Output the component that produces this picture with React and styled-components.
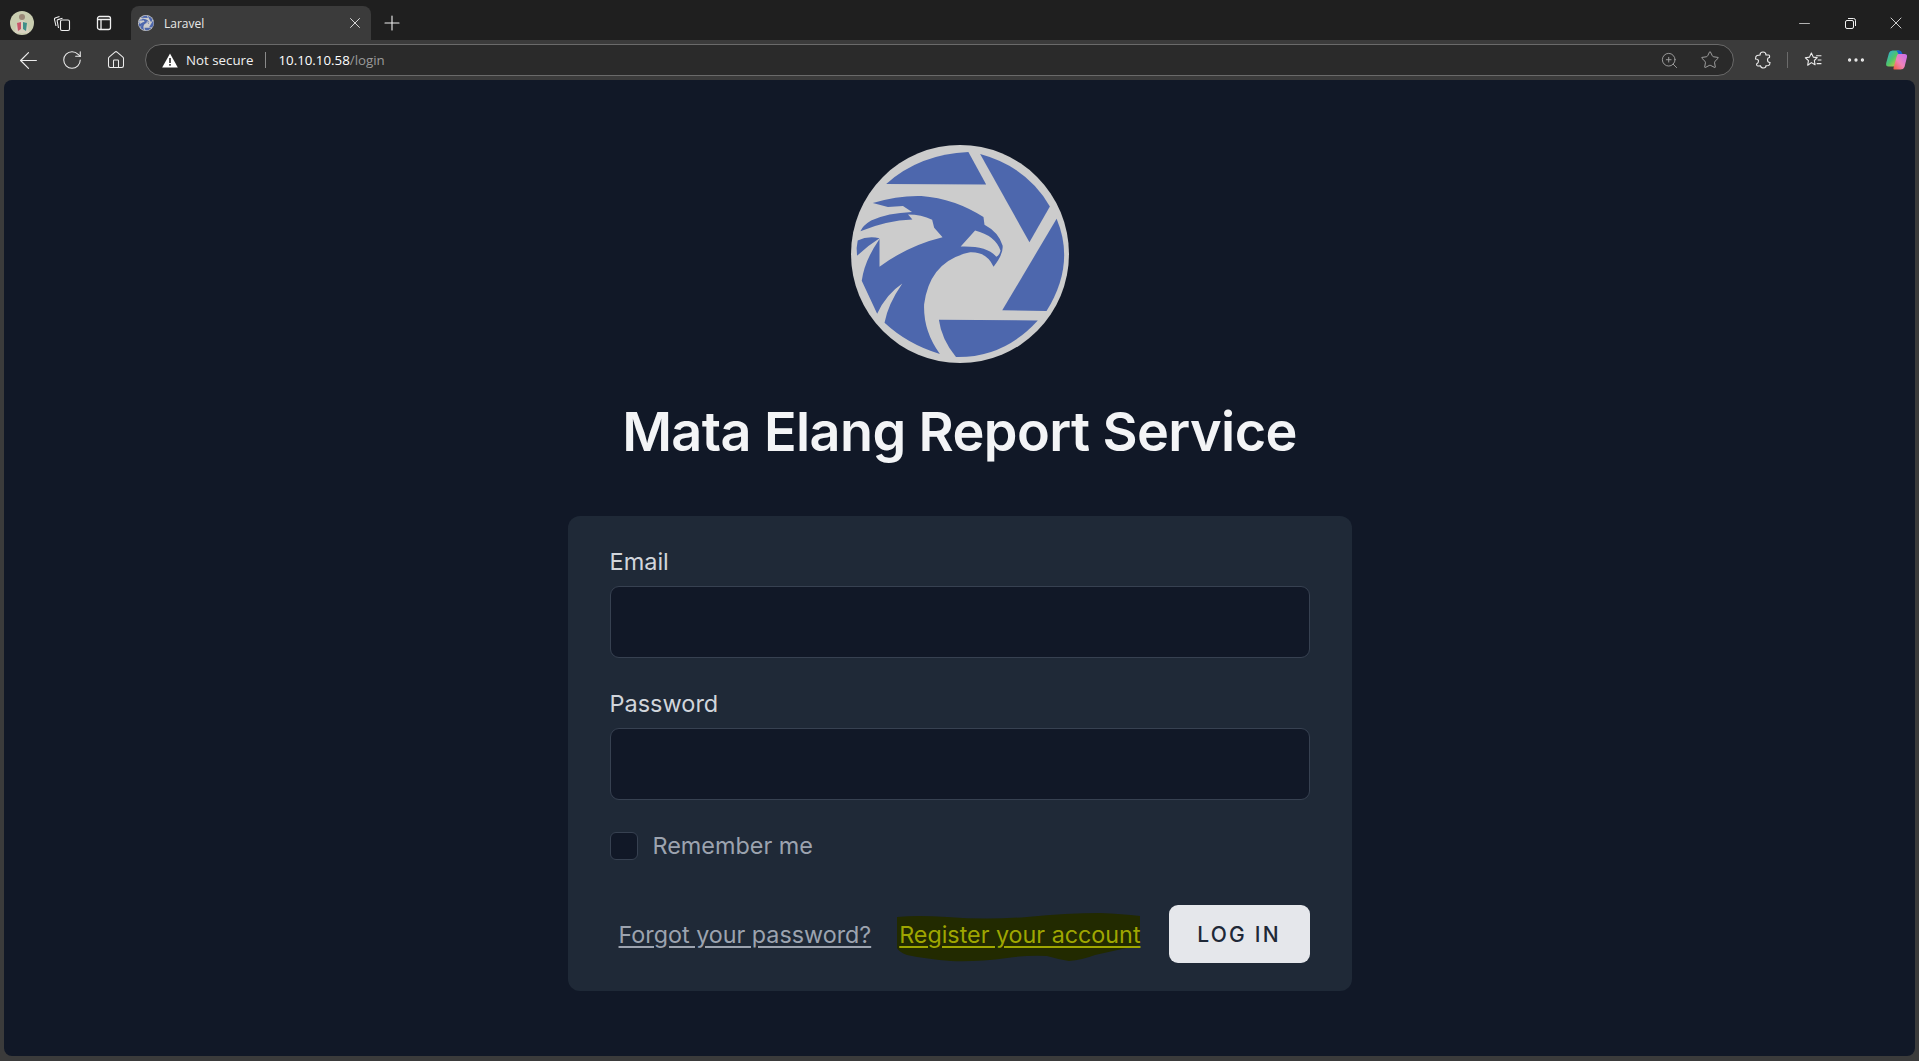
import React from "react";
import styled, { createGlobalStyle } from "styled-components";
import { ArrowLeft, RotateCw, Home, ZoomIn, Star, Ellipsis, X, Plus, Minus } from "lucide-react";

const GlobalStyle = createGlobalStyle`
  html, body {
    margin: 0;
    padding: 0;
    height: 100%;
    background: #3b3b3b;
    overflow: hidden;
  }
  * { box-sizing: border-box; }
`;

const Window = styled.div`
  display: flex;
  flex-direction: column;
  width: 1919px;
  height: 1061px;
  background: #3b3b3b;
`;

const TabStrip = styled.div`
  display: flex;
  align-items: flex-end;
  height: 40px;
  background: #1f1f1f;
`;

const StripIcons = styled.div`
  display: flex;
  align-items: center;
  height: 34px;
  width: 131px;
  padding-left: 2px;
`;

const StripIcon = styled.div`
  display: flex;
  align-items: center;
  justify-content: center;
  width: ${(p) => p.$w || 42}px;
  height: 34px;
  color: #f0f0f0;
`;

const Avatar = styled.div`
  width: 24px;
  height: 24px;
  border-radius: 50%;
  overflow: hidden;
`;

const Tab = styled.div`
  display: flex;
  align-items: center;
  width: 240px;
  height: 34px;
  padding: 0 7px;
  background: #3b3b3b;
  border-radius: 8px 8px 0 0;
  color: #e8e8e8;
  font: 12px "Open Sans", sans-serif;
`;

const TabTitle = styled.span`
  flex: 1;
  margin-left: 10px;
`;

const WindowControls = styled.div`
  display: flex;
  margin-left: auto;
  height: 34px;
`;

const WindowButton = styled.div`
  display: flex;
  align-items: center;
  justify-content: center;
  width: 46px;
  color: #f0f0f0;
`;

const Toolbar = styled.div`
  display: flex;
  align-items: center;
  height: 40px;
  padding-left: 6px;
  background: #3b3b3b;
`;

const ToolButton = styled.div`
  display: flex;
  align-items: center;
  justify-content: center;
  flex: none;
  width: ${(p) => p.$w || 44}px;
  height: 32px;
  color: ${(p) => p.$color || "#ededed"};
`;

const AddressBar = styled.div`
  display: flex;
  flex: none;
  align-items: center;
  width: 1589px;
  height: 32px;
  margin-left: 7px;
  padding: 0 2px 0 16px;
  background: #2a2a2a;
  border: 1px solid #6a6a6a;
  border-radius: 16px;
  font: 13.3px "Open Sans", sans-serif;
  color: #f0f0f0;
`;

const Secure = styled.span`
  margin-left: 8px;
`;

const Divider = styled.span`
  width: 1px;
  height: 16px;
  margin: 0 12px;
  background: #8a8a8a;
`;

const Url = styled.span`
  flex: 1;
  color: #ffffff;
  font-weight: 500;
  span {
    color: #9a9a9a;
    font-weight: 400;
  }
`;

const ToolGroup = styled.div`
  display: flex;
  flex: none;
  align-items: center;
  margin-left: 5px;
`;

const ToolDivider = styled.span`
  flex: none;
  width: 1px;
  height: 16px;
  background: #6b6b6b;
`;

const Page = styled.main`
  display: flex;
  flex-direction: column;
  align-items: center;
  height: 976px;
  margin: 0 4px;
  padding-top: 65px;
  background: #111827;
  border-radius: 8px;
`;

const LogoMark = styled.svg`
  display: block;
  flex: none;
`;

const Title = styled.h1`
  margin: 25px 0 0;
  color: #f3f4f6;
  font: 600 54px/88px Inter, sans-serif;
  letter-spacing: -0.6px;
`;

const Card = styled.form`
  width: 784px;
  height: 475px;
  margin-top: 40px;
  padding: 23px 42px 0;
  background: #1f2937;
  border-radius: 12px;
`;

const Field = styled.div`
  margin-bottom: 23px;
`;

const Label = styled.label`
  display: block;
  height: 41px;
  margin-bottom: 6px;
  color: #d1d5db;
  font: 400 23.5px/45px Inter, sans-serif;
`;

const Input = styled.input`
  display: block;
  width: 100%;
  height: 72px;
  background: #111827;
  border: 1.5px solid #374151;
  border-radius: 9px;
  outline: none;
`;

const RememberRow = styled.label`
  display: flex;
  align-items: center;
  height: 36px;
  margin-top: 28px;
  gap: 15px;
  color: #9ca3af;
  font: 400 23.4px/36px Inter, sans-serif;
`;

const Checkbox = styled.span`
  width: 28px;
  height: 28px;
  background: #111827;
  border: 1.5px solid #374151;
  border-radius: 6px;
`;

const Actions = styled.div`
  display: flex;
  align-items: center;
  justify-content: flex-end;
  gap: 28px;
  margin-top: 41px;
`;

const TextLink = styled.a`
  position: relative;
  padding-top: 2px;
  color: ${(p) => p.$color || "#9ca3af"};
  font: 400 23.3px/36px Inter, sans-serif;
  text-decoration: underline;
  text-underline-offset: 3px;
`;

const LinkText = styled.span`
  position: relative;
`;

const Scribble = styled.svg`
  position: absolute;
  left: -2px;
  top: -2px;
`;

const LoginButton = styled.button`
  width: 141px;
  height: 58px;
  background: #e5e7eb;
  border: 0;
  border-radius: 9px;
  color: #1f2937;
  font: 500 21px Inter, sans-serif;
  letter-spacing: 2.2px;
`;

const BLUE = "#4d67ad";

const Logo = ({ size }) => (
  <LogoMark width={size} height={size} viewBox="65 45 650 650">
    <circle cx="390" cy="370" r="325" fill="#cccccc" />
    <g fill={BLUE}>
      <path d="M170,161 Q270,72 415,66 L468,163 Z" />
      <path d="M450,72 Q590,110 658,228 L597,335 Z" />
      <path d="M678,265 Q735,400 648,540 L516,538 Z" />
      <path d="M327,566 L622,568 Q520,680 378,677 Q335,625 327,566 Z" />
      <g transform="translate(75 180)">
        <path d="M255,488 Q205,420 208,340 Q225,210 345,185 Q395,183 415,228 Q445,190 442,165 Q430,125 388,103 L385,80 Q300,25 200,17 Q130,15 55,38 L100,50 L145,47 L172,65 Q100,68 50,90 Q25,105 18,122 Q95,90 173,87 L160,72 Q200,72 232,88 L238,112 L263,140 Q160,165 75,228 L75,145 Q30,210 22,270 L68,368 Q95,310 143,278 Q100,340 90,395 Q160,460 255,488 Z" />
        <path d="M10,150 Q40,135 75,143 Q40,165 8,195 Q5,170 10,150 Z" />
        <path d="M317,168 L360,120 Q420,135 436,180 Q432,195 423,198 Q395,165 317,168 Z" fill="#cccccc" />
      </g>
    </g>
  </LogoMark>
);

const CollectionsIcon = () => (
  <svg width="18" height="18" viewBox="0 0 18 18" fill="none" stroke="currentColor" strokeWidth="1.1">
    <path d="M3 12 L1.5 5.5 Q1.3 4.5 2.2 4 L6.5 2.5" />
    <path d="M5.5 14 L4.2 7 Q4 6 5 5.6 L9.5 4.2" />
    <rect x="7.5" y="6" width="9" height="10.5" rx="1.5" />
  </svg>
);

const SidebarIcon = () => (
  <svg width="16" height="16" viewBox="0 0 16 16" fill="none" stroke="currentColor" strokeWidth="1.3">
    <rect x="1.5" y="1.5" width="13" height="13" rx="2" />
    <path d="M1.5 4.5 H14.5 M5 4.5 V14.5" />
  </svg>
);

const WarningIcon = () => (
  <svg width="16" height="15" viewBox="0 0 16 15">
    <path d="M8 0.5 L15.8 14.5 H0.2 Z" fill="#ffffff" strokeLinejoin="round" />
    <rect x="7.2" y="5" width="1.6" height="5" fill="#2a2a2a" />
    <rect x="7.2" y="11" width="1.6" height="1.7" fill="#2a2a2a" />
  </svg>
);

const RestoreIcon = () => (
  <svg width="11" height="11" viewBox="0 0 11 11" fill="none" stroke="currentColor" strokeWidth="1">
    <rect x="0.5" y="2.5" width="8" height="8" rx="1.5" />
    <path d="M3 0.5 H8.5 Q10.5 0.5 10.5 2.5 V8" />
  </svg>
);

const PuzzleIcon = () => (
  <svg width="18" height="18" viewBox="0 0 18 18" fill="none" stroke="currentColor" strokeWidth="1.1">
    <path d="M6 4 Q6 1 9 1 Q12 1 12 4 H14.5 Q16 4 15.5 6.5 Q13.5 6.5 13.5 9 Q13.5 11.5 16 11.5 Q16 14 14.5 14.5 L12 14.8 Q12 17 9.5 17 Q7 17 6.5 14.8 L4 15 Q2.5 15 2.6 13 Q4.5 12 4.5 10 Q4.5 8 1.5 8 Q1.5 5 3 4.5 Z" />
  </svg>
);

const FavoritesIcon = () => (
  <svg width="19" height="19" viewBox="0 0 18 18" fill="none" stroke="currentColor" strokeWidth="1.05">
    <path d="M7 2 L8.8 5.8 L12.5 6.3 L9.8 9 L10.5 13 L7 11 L3.5 13.5 L4.2 9.2 L1.3 6.4 L5.2 5.8 Z" strokeLinejoin="round" />
    <path d="M11.5 4.5 H16.5 M13 8.5 H16.5 M12 12 H16.5" />
  </svg>
);

const CopilotIcon = () => (
  <svg width="23" height="22" viewBox="0 0 22 22">
    <defs>
      <linearGradient id="copilotLeft" x1="0" y1="0" x2="1" y2="1">
        <stop offset="0" stopColor="#2aa7ea" />
        <stop offset="0.5" stopColor="#4fc66a" />
        <stop offset="1" stopColor="#f6c834" />
      </linearGradient>
      <linearGradient id="copilotRight" x1="1" y1="0" x2="0" y2="1">
        <stop offset="0" stopColor="#c56cf0" />
        <stop offset="0.55" stopColor="#f083b8" />
        <stop offset="1" stopColor="#f0603a" />
      </linearGradient>
    </defs>
    <path d="M7 1.5 H13 Q14.5 1.5 14 3 L10 16 Q9.5 17.5 8 17.5 H3 Q0 17.5 0.7 14 L3.5 4 Q4.3 1.5 7 1.5 Z" fill="url(#copilotLeft)" />
    <path d="M13 5 H19 Q22 5 21.5 8 L19 18 Q18 20.5 15 20.5 H9 Q7.5 20.5 8 19 L11.5 6.5 Q12 5 13 5 Z" fill="url(#copilotRight)" />
    <path d="M11 1.5 H14 Q16 1.5 16.5 4 L17 5 H13 Z" fill="#1662d6" />
  </svg>
);

const AvatarPic = () => (
  <svg width="24" height="24" viewBox="0 0 24 24">
    <rect width="24" height="24" fill="#c9cdb0" />
    <circle cx="12" cy="6" r="3" fill="#9b8878" />
    <path d="M5 22 Q6 10 12 9 Q18 10 19 22 Z" fill="#d8d2c0" />
    <path d="M7 12 L11 11 L11 18 L8 20 Z" fill="#c9566a" />
    <path d="M13 11 L17 12 L16 20 L13 18 Z" fill="#3f8f88" />
  </svg>
);

const App = () => (
  <Window>
    <GlobalStyle />
    <TabStrip>
      <StripIcons>
        <StripIcon $w={39}>
          <Avatar><AvatarPic /></Avatar>
        </StripIcon>
        <StripIcon><CollectionsIcon /></StripIcon>
        <StripIcon><SidebarIcon /></StripIcon>
      </StripIcons>
      <Tab>
        <Logo size={16} />
        <TabTitle>Laravel</TabTitle>
        <X size={18} strokeWidth={1.2} />
      </Tab>
      <StripIcon $w={42}><Plus size={24} strokeWidth={1.1} /></StripIcon>
      <WindowControls>
        <WindowButton><Minus size={17} strokeWidth={1} /></WindowButton>
        <WindowButton><RestoreIcon /></WindowButton>
        <WindowButton><X size={20} strokeWidth={1} /></WindowButton>
      </WindowControls>
    </TabStrip>
    <Toolbar>
      <ToolButton><ArrowLeft size={27} strokeWidth={1.05} /></ToolButton>
      <ToolButton><RotateCw size={22} strokeWidth={1.15} /></ToolButton>
      <ToolButton><Home size={20} strokeWidth={1.25} /></ToolButton>
      <AddressBar>
        <WarningIcon />
        <Secure>Not secure</Secure>
        <Divider />
        <Url>10.10.10.58<span>/login</span></Url>
        <ToolButton $w={40} $color="#a8a8a8"><ZoomIn size={19} strokeWidth={1.1} /></ToolButton>
        <ToolButton $w={42} $color="#a8a8a8"><Star size={20} strokeWidth={1.1} /></ToolButton>
      </AddressBar>
      <ToolGroup>
        <ToolButton $w={48}><PuzzleIcon /></ToolButton>
        <ToolDivider />
        <ToolButton $w={50}><FavoritesIcon /></ToolButton>
        <ToolButton $w={36}><Ellipsis size={22} strokeWidth={1.6} /></ToolButton>
        <ToolButton $w={45}><CopilotIcon /></ToolButton>
      </ToolGroup>
    </Toolbar>
    <Page>
      <Logo size={218} />
      <Title>Mata Elang Report Service</Title>
      <Card>
        <Field>
          <Label>Email</Label>
          <Input type="email" />
        </Field>
        <Field>
          <Label>Password</Label>
          <Input type="password" />
        </Field>
        <RememberRow>
          <Checkbox />
          Remember me
        </RememberRow>
        <Actions>
          <TextLink>Forgot your password?</TextLink>
          <TextLink $color="#9fa600">
            <Scribble width="244" height="50" viewBox="0 0 244 50">
              <path d="M0 4 Q20 2 50 4 Q90 7 130 4 Q170 0 203 0 Q225 1 243 3 L243 32 Q225 36 198 42 Q185 47 172 48 Q160 46 150 43 Q130 42 110 45 Q80 49 54 48 Q30 46 10 42 Q2 39 0 35 Z" fill="#222a00" />
            </Scribble>
            <LinkText>Register your account</LinkText>
          </TextLink>
          <LoginButton type="button">LOG IN</LoginButton>
        </Actions>
      </Card>
    </Page>
  </Window>
);

export default App;
